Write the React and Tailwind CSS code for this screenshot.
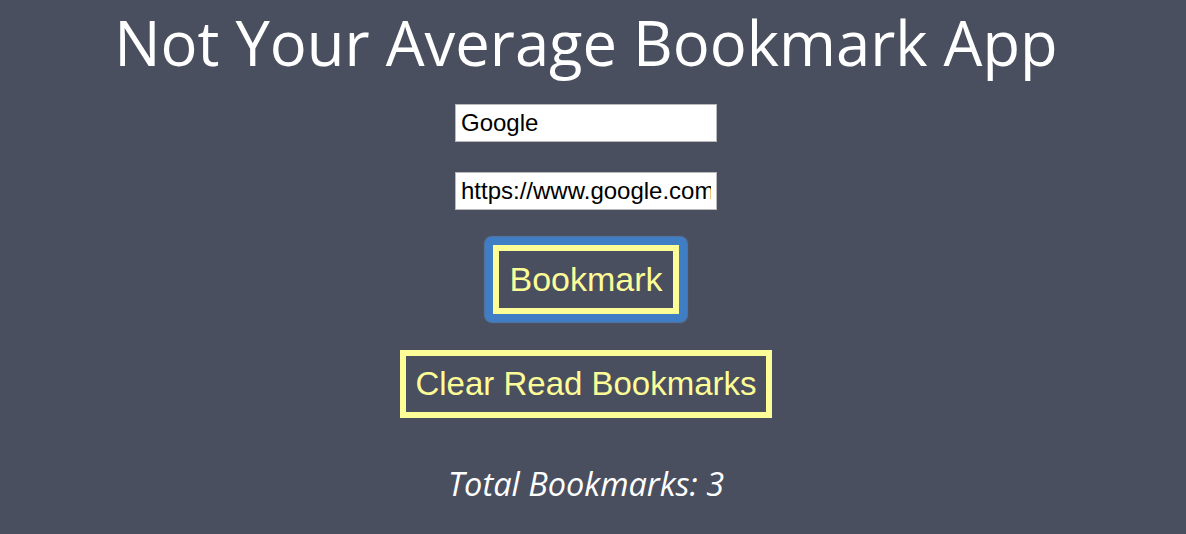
export default function App() {
  return (
    <div className="min-h-[534px] w-full bg-[#4a4f5f] flex flex-col items-center pr-[14px]">
      <h1 className="text-[61.5px] leading-[84px] text-white font-['Open_Sans',sans-serif] font-normal whitespace-nowrap">
        Not Your Average Bookmark App
      </h1>
      <input
        className="mt-[20px] w-[262px] h-[38px] bg-white border border-[#b9b9b9] px-[5px] text-[24px] text-black font-['Liberation_Sans',Arial,sans-serif] outline-none"
        defaultValue="Google"
      />
      <input
        className="mt-[30px] w-[262px] h-[38px] bg-white border border-[#b9b9b9] px-[5px] text-[24px] text-black font-['Liberation_Sans',Arial,sans-serif] outline-none"
        defaultValue="https://www.google.com"
      />
      <div className="mt-[27px] p-[8px] rounded-[7px] bg-[#3f7dc5] shadow-[0_0_1px_1px_rgba(90,143,208,0.6)]">
        <button className="w-[186px] h-[69px] border-[6px] border-[#fdfd98] bg-[#4a4f5f] text-[#fdfd98] text-[34px] font-['Liberation_Sans',Arial,sans-serif] flex items-center justify-center">
          Bookmark
        </button>
      </div>
      <button className="mt-[28px] w-[372px] h-[68px] border-[6px] border-[#fdfd98] text-[#fdfd98] text-[33px] font-['Liberation_Sans',Arial,sans-serif] flex items-center justify-center whitespace-nowrap">
        Clear Read Bookmarks
      </button>
      <p className="mt-[46px] text-[32.5px] leading-[40px] italic text-white font-['Open_Sans',sans-serif]">
        Total Bookmarks: 3
      </p>
    </div>
  );
}
